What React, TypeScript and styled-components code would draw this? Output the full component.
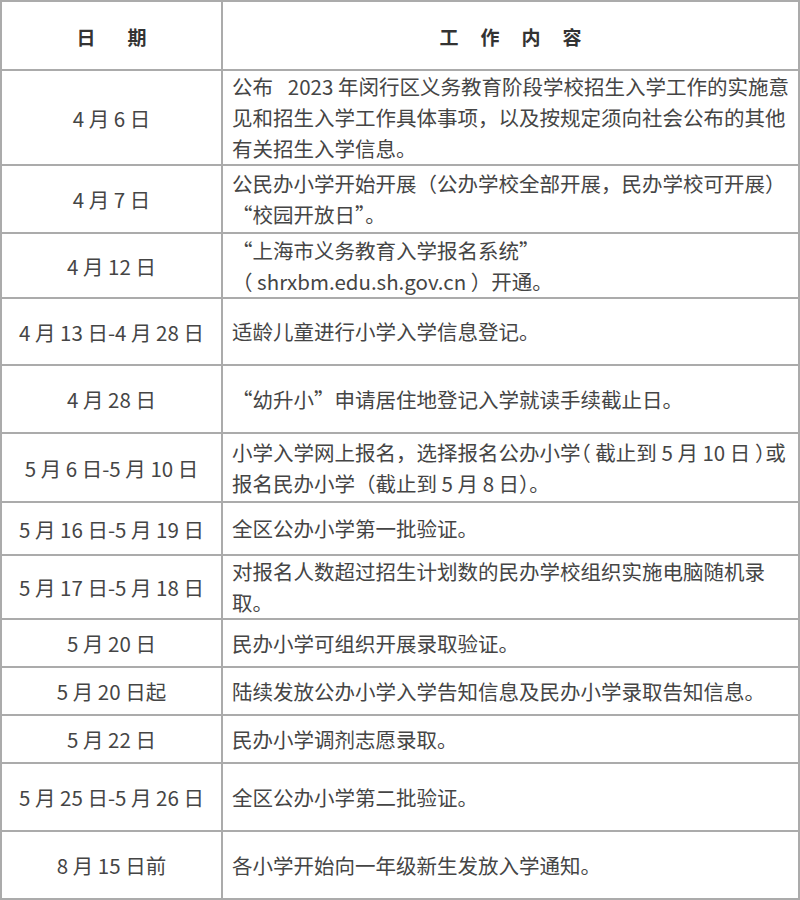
import React from 'react';
import styled, {createGlobalStyle} from 'styled-components';

type Entry = {
    date: string;
    lines: React.ReactNode[];
    height: number;
};

const GlobalStyle = createGlobalStyle`
    html, body {
        margin: 0;
        padding: 0;
        background: #ffffff;
    }
    body {
        font-family: "Noto Sans CJK SC", "Noto Sans", sans-serif;
    }
`;

// full-width punctuation squeezed to half width, as in the source table
const Half = styled.span`
    font-feature-settings: "halt" 1;
`;

const entries: Entry[] = [
    {
        date: '4 月 6 日',
        height: 95,
        lines: [
            '公布\u2002 2023 年闵行区义务教育阶段学校招生入学工作的实施意',
            '见和招生入学工作具体事项，以及按规定须向社会公布的其他',
            '有关招生入学信息。',
        ],
    },
    {
        date: '4 月 7 日',
        height: 68,
        lines: ['公民办小学开始开展（公办学校全部开展，民办学校可开展）', '“校园开放日”。'],
    },
    {
        date: '4 月 12 日',
        height: 65,
        lines: ['“上海市义务教育入学报名系统”', '（ shrxbm.edu.sh.gov.cn ）开通。'],
    },
    {date: '4 月 13 日-4 月 28 日', height: 67, lines: ['适龄儿童进行小学入学信息登记。']},
    {date: '4 月 28 日', height: 68, lines: ['“幼升小”申请居住地登记入学就读手续截止日。']},
    {
        date: '5 月 6 日-5 月 10 日',
        height: 69,
        lines: [
            <>
                {'小学入学网上报名，选择报名公办小学'}
                <Half>{'（'}</Half>
                {' 截止到 5 月 10 日 '}
                <Half>{'）'}</Half>
                {'或'}
            </>,
            '报名民办小学（截止到 5 月 8 日）。',
        ],
    },
    {date: '5 月 16 日-5 月 19 日', height: 53, lines: ['全区公办小学第一批验证。']},
    {
        date: '5 月 17 日-5 月 18 日',
        height: 64,
        lines: ['对报名人数超过招生计划数的民办学校组织实施电脑随机录', '取。'],
    },
    {date: '5 月 20 日', height: 48, lines: ['民办小学可组织开展录取验证。']},
    {date: '5 月 20 日起', height: 48, lines: ['陆续发放公办小学入学告知信息及民办小学录取告知信息。']},
    {date: '5 月 22 日', height: 48, lines: ['民办小学调剂志愿录取。']},
    {date: '5 月 25 日-5 月 26 日', height: 68, lines: ['全区公办小学第二批验证。']},
    {date: '8 月 15 日前', height: 68, lines: ['各小学开始向一年级新生发放入学通知。']},
];

export default function App() {
    return (
        <>
            <GlobalStyle/>
            <Frame lang='zh-CN'>
                <Row $height={67} $first={true}>
                    <HeadCell $gap={32}>
                        <span>{'日'}</span>
                        <span>{'期'}</span>
                    </HeadCell>
                    <HeadCell $gap={22}>
                        <span>{'工'}</span>
                        <span>{'作'}</span>
                        <span>{'内'}</span>
                        <span>{'容'}</span>
                    </HeadCell>
                </Row>
                {entries.map((entry) => (
                    <Row
                        key={entry.date}
                        $height={entry.height}
                    >
                        <DateCell>{entry.date}</DateCell>
                        <TextCell>
                            {entry.lines.map((line, i) => (
                                <Line key={i}>{line}</Line>
                            ))}
                        </TextCell>
                    </Row>
                ))}
            </Frame>
        </>
    );
}

const Frame = styled.div`
    width: 800px;
    height: 900px;
    box-sizing: border-box;
    border: 2px solid #ababab;
    display: flex;
    flex-direction: column;
    color: #454545;
`;

const Row = styled.div<{$height: number; $first?: boolean}>`
    display: grid;
    grid-template-columns: 221px 1fr;
    height: ${(p) => p.$height}px;
    box-sizing: border-box;
    border-top: ${(p) => (p.$first ? 'none' : '2px solid #ababab')};
    flex: none;
`;

const HeadCell = styled.div<{$gap: number}>`
    display: flex;
    align-items: center;
    justify-content: center;
    gap: ${(p) => p.$gap}px;
    padding-top: 2px;
    font-size: 19px;
    font-weight: 700;
    color: #333333;

    &:first-child {
        border-right: 2px solid #ababab;
    }
`;

const DateCell = styled.div`
    display: flex;
    align-items: center;
    justify-content: center;
    border-right: 2px solid #ababab;
    font-size: 20.5px;
    white-space: nowrap;
`;

const TextCell = styled.div`
    display: flex;
    flex-direction: column;
    justify-content: center;
    padding-left: 9px;
    font-size: 20.5px;
    line-height: 31px;
`;

const Line = styled.div`
    white-space: nowrap;
`;
